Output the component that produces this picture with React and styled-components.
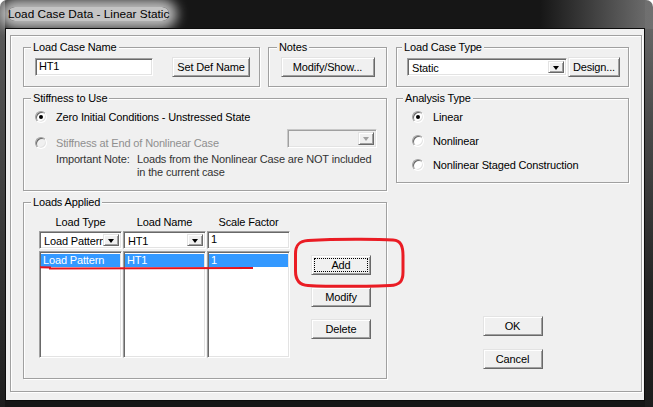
import React from "react";
import styled, { createGlobalStyle } from "styled-components";

const GlobalStyle = createGlobalStyle`
  html, body { margin: 0; padding: 0; background: #ffffff; }
  body {
    font-family: "Liberation Sans", Arial, sans-serif;
    font-size: 11px;
    letter-spacing: -0.15px;
    color: #000;
  }
  * { box-sizing: border-box; }
`;

const Window = styled.div`
  position: relative;
  width: 653px;
  height: 407px;
  display: flex;
  flex-direction: column;
  padding: 0 8px 6px 5px;
  border-radius: 7px 7px 0 0;
  overflow: hidden;
  background:
    linear-gradient(90deg, rgba(110,110,110,0) 0, rgba(110,110,110,0) 540px, rgba(112,112,112,1) 653px) 0 0 / 100% 29px no-repeat,
    linear-gradient(180deg, #6c6c6c 0, #4a4a4a 30%, #262626 70%, #1c1c1c 100%) 645px 0 / 8px 100% no-repeat,
    linear-gradient(180deg, #5e5e5e 0, #444 40%, #2a2a2a 80%, #1e1e1e 100%) 0 0 / 5px 100% no-repeat,
    #161616;
`;

const TitleBar = styled.div`
  height: 28px;
  display: flex;
  align-items: center;
  margin-left: -5px;
  padding-left: 8px;
`;

const TitleText = styled.span`
  font-family: "Liberation Sans", Arial, sans-serif;
  font-size: 11.8px;
  letter-spacing: 0;
  line-height: 14px;
  color: #000;
  background: rgba(215, 215, 215, 0.9);
  box-shadow: 0 0 12px 8px rgba(215, 215, 215, 0.85);
  border-radius: 10px;
`;

const Client = styled.div`
  flex: 1;
  display: flex;
  background: #f0f0f0;
  border: 1px solid #0c0c0c;
  padding: 6px 2px 8px 4px;
`;

const Frame = styled.div`
  flex: 1;
  border: 1px solid #a0a0a0;
  box-shadow: inset 1px 1px 0 #fff, 1px 1px 0 #fff;
  padding: 5px 0 0 12px;
  display: grid;
  grid-template-columns: 364px 233px;
  grid-template-rows: auto auto auto;
  column-gap: 9px;
  row-gap: 5px;
  align-content: start;
  align-items: start;
`;

const TopLeft = styled.div`
  display: flex;
  gap: 8px;
`;

const Group = styled.fieldset`
  margin: 0;
  padding: 0;
  min-width: 0;
  width: ${p => p.$w || "auto"};
  border: 1px solid #a0a0a0;
  box-shadow: inset 1px 1px 0 #fff, 1px 1px 0 #fff;
`;

const Legend = styled.legend`
  margin-left: ${p => p.$indent ?? 7}px;
  padding: 0 2px;
  line-height: 13px;
  height: 13px;
  background: #f0f0f0;
`;

const RowBody = styled.div`
  display: flex;
  align-items: center;
  justify-content: ${p => p.$justify || "flex-start"};
  gap: ${p => p.$gap || 0}px;
  padding: ${p => p.$pad};
`;

const ColBody = styled.div`
  display: flex;
  flex-direction: column;
  padding: ${p => p.$pad};
  gap: ${p => p.$gap || 0}px;
`;

const raised = `
  background: #f0f0f0;
  border: 1px solid;
  border-color: #e3e3e3 #696969 #696969 #e3e3e3;
  box-shadow: inset 1px 1px 0 #fff, inset -1px -1px 0 #a0a0a0;
`;

const sunken = `
  border: 1px solid;
  border-color: #a0a0a0 #fff #fff #a0a0a0;
  box-shadow: inset 1px 1px 0 #696969, inset -1px -1px 0 #e3e3e3;
`;

const Button = styled.button`
  ${raised}
  width: ${p => p.$w}px;
  height: 20px;
  padding: 0;
  margin: 0;
  font: inherit;
  letter-spacing: inherit;
  color: #000;
  flex: none;
  outline: ${p => (p.$focus ? "1px dotted #000" : "none")};
  outline-offset: -4px;
`;

const TextBox = styled.div`
  ${sunken}
  background: #fff;
  width: ${p => p.$w}px;
  height: 18px;
  padding: 0 3px;
  line-height: 15px;
  flex: none;
`;

const Combo = styled.div`
  ${sunken}
  background: ${p => (p.$disabled ? "#f0f0f0" : "#fff")};
  border-color: ${p => (p.$disabled ? "#c8c8c8 #fff #fff #c8c8c8" : "#a0a0a0 #fff #fff #a0a0a0")};
  box-shadow: ${p =>
    p.$disabled
      ? "inset 1px 1px 0 #a0a0a0, inset -1px -1px 0 #e3e3e3"
      : "inset 1px 1px 0 #696969, inset -1px -1px 0 #e3e3e3"};
  width: ${p => p.$w}px;
  height: ${p => p.$h || 18}px;
  padding: 2px;
  display: flex;
  flex: none;
  margin-left: ${p => (p.$push ? "auto" : "0")};
  margin-bottom: ${p => p.$mb || 0}px;
`;

const ComboText = styled.span`
  flex: 1;
  overflow: hidden;
  white-space: nowrap;
  padding-left: 2px;
  line-height: 14px;
`;

const ArrowBtn = styled.span`
  ${raised}
  width: 16px;
  flex: none;
  display: flex;
  align-items: center;
  justify-content: center;
  &::after {
    content: "";
    border-left: 3.5px solid transparent;
    border-right: 3.5px solid transparent;
    border-top: 4px solid ${p => (p.$disabled ? "#a0a0a0" : "#000")};
    margin-top: 1px;
  }
`;

const RadioRow = styled.div`
  display: flex;
  align-items: ${p => p.$align || "center"};
  gap: 9px;
  min-height: 14px;
  color: ${p => (p.$disabled ? "#8f8f8f" : "#000")};
`;

const RadioCircle = styled.span`
  position: relative;
  width: 12px;
  height: 12px;
  flex: none;
  border-radius: 50%;
  background: ${p => (p.$disabled ? "#f0f0f0" : "#fff")};
  border: 1px solid;
  border-color: #a0a0a0 #fff #fff #a0a0a0;
  box-shadow: inset 1px 1px 0 #696969, inset -1px -1px 0 #e3e3e3;
  margin-bottom: ${p => p.$mb || 0}px;
  &::after {
    content: "";
    display: ${p => (p.$checked ? "block" : "none")};
    position: absolute;
    left: 3px;
    top: 3px;
    width: 4px;
    height: 4px;
    border-radius: 50%;
    background: #000;
  }
`;

const RadioLabel = styled.span`
  line-height: 14px;
`;

const Note = styled.div`
  display: grid;
  grid-template-columns: 81px auto;
  margin: -2px 0 0 21px;
  line-height: 13px;
  color: #333;
`;

const LoadsBody = styled.div`
  display: flex;
  gap: 21px;
  padding: 6px 0 20px 15px;
`;

const Table = styled.div`
  display: grid;
  grid-template-columns: 83px 83px 83px;
  grid-template-rows: 14px 18px 107px;
  column-gap: 1px;
  row-gap: 2px;
`;

const Header = styled.div`
  text-align: center;
  line-height: 14px;
`;

const List = styled.div`
  ${sunken}
  background: #fff;
  padding: 2px 1px 0 1px;
  overflow: hidden;
`;

const ListItem = styled.div`
  height: 13px;
  line-height: 13px;
  padding-left: 2px;
  white-space: nowrap;
  background: ${p => (p.$selected ? "#3399ff" : "transparent")};
  color: ${p => (p.$selected ? "#fff" : "#000")};
`;

const SideButtons = styled.div`
  display: flex;
  flex-direction: column;
  gap: 12px;
  padding-top: 40px;
`;

const Actions = styled.div`
  display: flex;
  flex-direction: column;
  align-items: center;
  gap: 13px;
  padding-top: 120px;
`;

const Annotation = styled.svg`
  position: absolute;
  left: ${p => p.$x}px;
  top: ${p => p.$y}px;
  overflow: visible;
  pointer-events: none;
`;

export default function App() {
  return (
    <>
      <GlobalStyle />
      <Window>
        <TitleBar>
          <TitleText>Load Case Data - Linear Static</TitleText>
        </TitleBar>
        <Client>
          <Frame>
            <TopLeft>
              <Group $w="237px">
                <Legend>Load Case Name</Legend>
                <RowBody $justify="space-between" $pad="3px 9px 9px 11px">
                  <TextBox $w={118}>HT1</TextBox>
                  <Button $w={78}>Set Def Name</Button>
                </RowBody>
              </Group>
              <Group $w="119px">
                <Legend $indent={8}>Notes</Legend>
                <RowBody $justify="center" $pad="3px 0 9px 0">
                  <Button $w={94}>Modify/Show...</Button>
                </RowBody>
              </Group>
            </TopLeft>

            <Group>
              <Legend $indent={5}>Load Case Type</Legend>
              <RowBody $gap={1} $pad="3px 0 9px 10px">
                <Combo $w={160}>
                  <ComboText>Static</ComboText>
                  <ArrowBtn />
                </Combo>
                <Button $w={52}>Design...</Button>
              </RowBody>
            </Group>

            <Group>
              <Legend>Stiffness to Use</Legend>
              <ColBody $pad="5px 9px 11px 11px" $gap={5}>
                <RadioRow>
                  <RadioCircle $checked />
                  <RadioLabel>Zero Initial Conditions - Unstressed State</RadioLabel>
                </RadioRow>
                <RadioRow $disabled $align="flex-end">
                  <RadioCircle $disabled $mb={1} />
                  <RadioLabel>Stiffness at End of Nonlinear Case</RadioLabel>
                  <Combo $w={90} $h={19} $disabled $push $mb={2}>
                    <ComboText />
                    <ArrowBtn $disabled />
                  </Combo>
                </RadioRow>
                <Note>
                  <span>Important Note:</span>
                  <span>
                    Loads from the Nonlinear Case are NOT included
                    <br />
                    in the current case
                  </span>
                </Note>
              </ColBody>
            </Group>

            <Group>
              <Legend $indent={6}>Analysis Type</Legend>
              <ColBody $pad="5px 9px 10px 15px" $gap={10}>
                <RadioRow>
                  <RadioCircle $checked />
                  <RadioLabel>Linear</RadioLabel>
                </RadioRow>
                <RadioRow>
                  <RadioCircle />
                  <RadioLabel>Nonlinear</RadioLabel>
                </RadioRow>
                <RadioRow>
                  <RadioCircle />
                  <RadioLabel>Nonlinear Staged Construction</RadioLabel>
                </RadioRow>
              </ColBody>
            </Group>

            <Group>
              <Legend>Loads Applied</Legend>
              <LoadsBody>
                <Table>
                  <Header>Load Type</Header>
                  <Header>Load Name</Header>
                  <Header>Scale Factor</Header>
                  <Combo $w={83}>
                    <ComboText>Load Pattern</ComboText>
                    <ArrowBtn />
                  </Combo>
                  <Combo $w={83}>
                    <ComboText>HT1</ComboText>
                    <ArrowBtn />
                  </Combo>
                  <TextBox $w={83}>1</TextBox>
                  <List>
                    <ListItem $selected>Load Pattern</ListItem>
                  </List>
                  <List>
                    <ListItem $selected>HT1</ListItem>
                  </List>
                  <List>
                    <ListItem $selected>1</ListItem>
                  </List>
                </Table>
                <SideButtons>
                  <Button $w={60} $focus>Add</Button>
                  <Button $w={60}>Modify</Button>
                  <Button $w={60}>Delete</Button>
                </SideButtons>
              </LoadsBody>
            </Group>

            <Actions>
              <Button $w={60}>OK</Button>
              <Button $w={60}>Cancel</Button>
            </Actions>
          </Frame>
        </Client>

        <Annotation $x={292} $y={236} width="116" height="56" viewBox="0 0 116 56">
          <path
            d="M16 4.5 C 45 3, 85 3, 101 4 C 109 4.5, 111 10, 111 20 L 111 36 C 111 45, 108 49, 98 49.5 C 70 50.5, 35 50.5, 16 49.5 C 7 49, 3.5 44, 3.5 35 L 3.5 18 C 3.5 9, 7 5, 16 4.5 Z"
            fill="none"
            stroke="#ea1c24"
            strokeWidth="3"
          />
        </Annotation>
        <Annotation $x={38} $y={263} width="220" height="8" viewBox="0 0 220 8">
          <path d="M2 4.2 L 12 4.4 L 12 5.4 L 215 5.1" fill="none" stroke="#e3131c" strokeWidth="2" />
        </Annotation>
      </Window>
    </>
  );
}
